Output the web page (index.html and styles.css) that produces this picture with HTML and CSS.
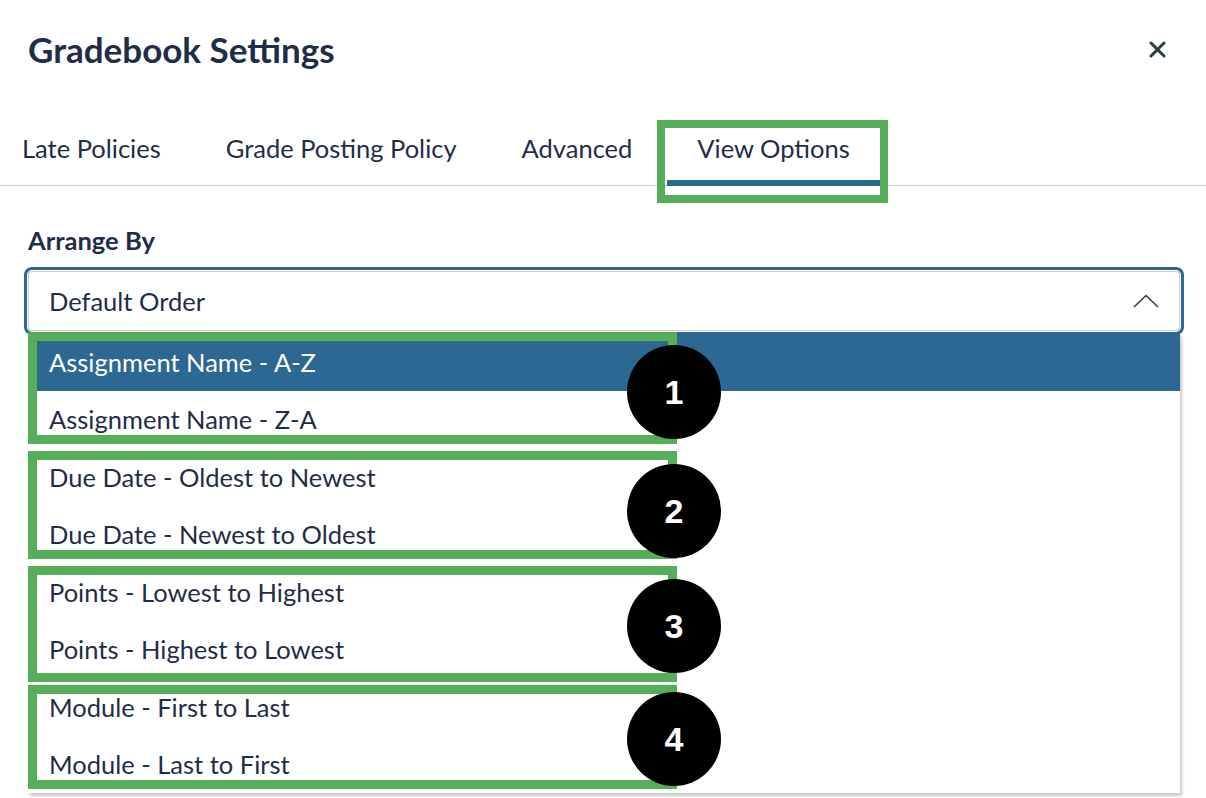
FILE: index.html
```html
<!DOCTYPE html>
<html lang="en">
<head>
<meta charset="UTF-8">
<meta name="viewport" content="width=device-width, initial-scale=1.0">
<title>Gradebook Settings</title>
<link rel="stylesheet" href="styles.css">
</head>
<body>
<div class="modal">
  <div class="header">
    <h1 class="title">Gradebook Settings</h1>
    <button class="close" aria-label="Close">
      <svg width="17" height="17" viewBox="0 0 17 17"><path d="M2 2L15 15M15 2L2 15" stroke="#2d3b45" stroke-width="3" stroke-linecap="round"/></svg>
    </button>
  </div>

  <div class="tabs">
    <div class="tab">Late Policies</div>
    <div class="tab">Grade Posting Policy</div>
    <div class="tab">Advanced</div>
    <div class="tab active">View Options</div>
  </div>

  <div class="content">
    <div class="label">Arrange By</div>
    <div class="select">
      <span>Default Order</span>
      <svg class="chevron" width="26" height="14" viewBox="0 0 26 14"><path d="M1 13L13 1.5L25 13" fill="none" stroke="#2d3b45" stroke-width="1.6"/></svg>
    </div>
    <div class="list">
      <div class="item selected">Assignment Name - A-Z</div>
      <div class="item">Assignment Name - Z-A</div>
      <div class="item">Due Date - Oldest to Newest</div>
      <div class="item">Due Date - Newest to Oldest</div>
      <div class="item">Points - Lowest to Highest</div>
      <div class="item">Points - Highest to Lowest</div>
      <div class="item">Module - First to Last</div>
      <div class="item">Module - Last to First</div>

      <div class="mark g1"></div>
      <div class="mark g2"></div>
      <div class="mark g3"></div>
      <div class="mark g4"></div>
      <div class="badge b1">1</div>
      <div class="badge b2">2</div>
      <div class="badge b3">3</div>
      <div class="badge b4">4</div>
    </div>
  </div>
</div>
</body>
</html>
```

FILE: styles.css
```css
*{
  margin: 0;
  padding: 0;
  box-sizing: border-box;
}
body{
  font-family: Lato, "Liberation Sans", sans-serif;
  color: #1f2d47;
  background: #fff;
}
.modal{
  width: 1206px;
  height: 798px;
  overflow: hidden;
}
.header{
  display: flex;
  align-items: center;
  justify-content: space-between;
  height: 110px;
  padding: 0 40px 12px 28px;
}
.title{
  font-size: 35px;
  font-weight: 700;
}
.close{
  border: 0;
  background: none;
  display: flex;
}
.tabs{
  display: flex;
  gap: 5px;
  margin-left: -8px;
  height: 76px;
  border-bottom: 1px solid #c7cdd1;
}
.tab{
  position: relative;
  display: flex;
  align-items: center;
  height: 76px;
  padding: 5px 30px 0;
  border-bottom: 6px solid transparent;
  font-size: 25.5px;
}
.tab.active{
  border-bottom-color: #2c6891;
}
.tab.active::after{
  content: "";
  position: absolute;
  left: -10px;
  right: -8px;
  top: 10px;
  bottom: -23px;
  border: 8px solid #56ae5b;
}
.content{
  padding: 38px 22px 0 24px;
}
.label{
  font-size: 25.5px;
  font-weight: 700;
  line-height: 32px;
  padding-left: 4px;
  margin-bottom: 15px;
}
.select{
  display: flex;
  align-items: center;
  justify-content: space-between;
  margin: 0 4px;
  height: 60px;
  padding: 0 20px 0 20px;
  border: 1px solid #c7cdd1;
  border-radius: 4px;
  box-shadow: 0 0 0 1px #fff, 0 0 0 4px #2c6891;
  font-size: 25.5px;
}
.list{
  position: relative;
  margin: 2px 4px 0;
  background: #fff;
  box-shadow: 2px 3px 3px rgba(0, 0, 0, 0.22);
}
.item{
  display: flex;
  align-items: center;
  height: 57.5px;
  padding-left: 21px;
  font-size: 25.5px;
}
.item.selected{
  background: #2c6891;
  color: #fff;
}
.mark{
  position: absolute;
  left: 0;
  width: 649px;
  border: 9px solid #56ae5b;
}
.g1{ top: -1px; height: 112px; }
.g2{ top: 118px; height: 108px; }
.g3{ top: 233px; height: 116px; }
.g4{ top: 352px; height: 104px; }
.badge{
  position: absolute;
  left: 599px;
  width: 94px;
  height: 94px;
  border-radius: 50%;
  background: #000;
  color: #fff;
  display: flex;
  align-items: center;
  justify-content: center;
  font-family: "Liberation Sans", Arial, sans-serif;
  font-weight: 700;
  font-size: 34px;
}
.b1{ top: 12px; }
.b2{ top: 131px; }
.b3{ top: 246px; }
.b4{ top: 359px; }
```
